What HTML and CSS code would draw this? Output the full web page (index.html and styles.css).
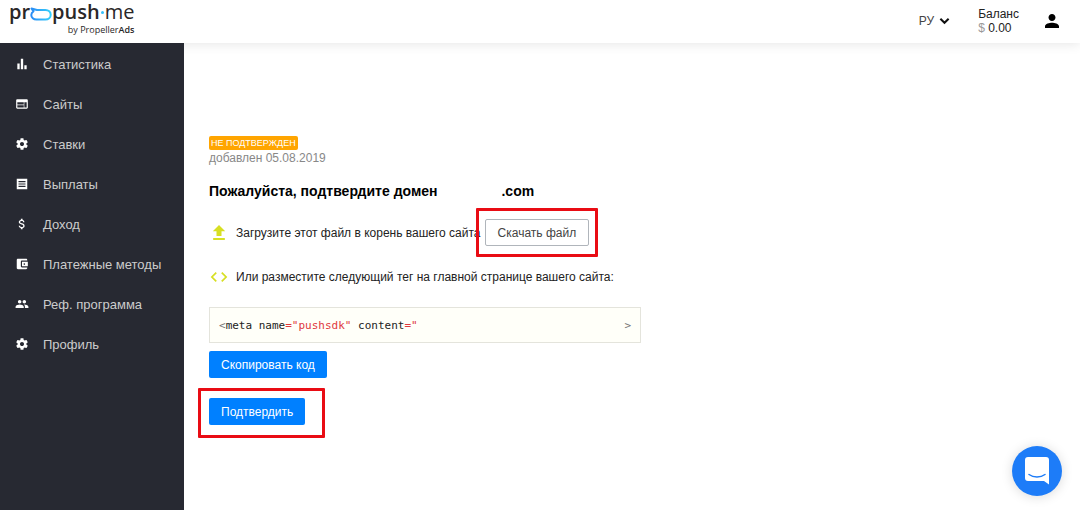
FILE: index.html
```html
<!DOCTYPE html>
<html lang="ru">
  <head>
    <meta charset="utf-8">
    <meta name="viewport" content="width=device-width, initial-scale=1.0">
    <title>ProPush.me</title>
    <link rel="stylesheet" href="styles.css">
  </head>
  <body>
    <!--Header-->
    <header class="header">
      <a class="logo" href="#">
        <span class="logo-name">
          <b>pr</b>
          <svg class="logo-cloud" viewBox="0 0 22 14" width="22" height="14">
            <defs>
              <linearGradient id="cloud" x1="0" x2="1">
                <stop offset="0" stop-color="#2b8cf5"/>
                <stop offset="1" stop-color="#35d0fb"/>
              </linearGradient>
            </defs>
            <path d="M1.500 1.500 L7 3 H15.500 C18.500 3 20.700 5 20.700 7.800 C20.700 10.600 18.500 12.600 15.500 12.600 H6.500 C3.500 12.600 1.300 10.600 1.300 8 C1.300 6.300 2.200 5 3.500 4.300 Z" fill="none" stroke="url(#cloud)" stroke-width="2" stroke-linejoin="round"/>
          </svg>
          <b>push</b><i class="logo-dot"></i><span>me</span>
        </span>
        <span class="logo-by">by Propeller<b>Ads</b></span>
      </a>
      <div class="header-right">
        <button class="lang" type="button">РУ
          <svg viewBox="0 0 12 8" width="11" height="8"><path d="M1.500 1.500 L6 6 L10.500 1.500" fill="none" stroke="#111" stroke-width="2.200"/></svg>
        </button>
        <div class="balance">
          <div>Баланс</div>
          <div><span class="currency">$</span> 0.00</div>
        </div>
        <button class="user" type="button" aria-label="Профиль">
          <svg viewBox="4 4 16 16" width="14" height="14"><path d="M12 12c2.200 0 4-1.800 4-4s-1.800-4-4-4-4 1.800-4 4 1.800 4 4 4zm0 2c-2.700 0-8 1.300-8 4v2h16v-2c0-2.700-5.300-4-8-4z"/></svg>
        </button>
      </div>
    </header>

    <div class="page">
      <!--Menu-->
      <nav class="sidebar">
        <a class="menu-item" href="#">
          <svg viewBox="0 0 24 24"><path d="M4 11h4v10H4zM10 3h4v18h-4zM16 14h4v7h-4z"/></svg>
          Статистика
        </a>
        <a class="menu-item" href="#">
          <svg viewBox="0 0 24 24"><path d="M20 4H4c-1.100 0-2 .9-2 2v12c0 1.100.9 2 2 2h16c1.100 0 2-.9 2-2V6c0-1.100-.9-2-2-2zm-5 14H4v-4h11v4zm0-5H4V9h11v4zm5 5h-4V9h4v9z"/></svg>
          Сайты
        </a>
        <a class="menu-item" href="#">
          <svg viewBox="0 0 24 24"><path d="M19.430 12.980c.04-.32.07-.64.07-.98s-.03-.66-.07-.98l2.110-1.650c.19-.15.240-.42.120-.64l-2-3.460c-.12-.22-.39-.3-.61-.22l-2.490 1c-.52-.4-1.080-.73-1.690-.98l-.38-2.650C14.460 2.180 14.250 2 14 2h-4c-.25 0-.46.180-.49.420l-.38 2.650c-.61.250-1.170.590-1.690.980l-2.490-1c-.23-.09-.49 0-.61.220l-2 3.460c-.13.220-.07.490.120.640l2.110 1.650c-.04.320-.07.650-.07.980s.03.660.07.980l-2.110 1.650c-.19.150-.24.420-.12.640l2 3.460c.12.220.39.300.61.220l2.490-1c.52.400 1.080.730 1.690.980l.38 2.650c.03.240.24.420.49.420h4c.25 0 .46-.18.490-.42l.38-2.650c.61-.25 1.170-.59 1.690-.98l2.490 1c.23.090.49 0 .61-.22l2-3.460c.12-.22.070-.49-.12-.64l-2.110-1.650zM12 15.500c-1.930 0-3.500-1.570-3.500-3.500s1.570-3.500 3.500-3.500 3.500 1.570 3.500 3.500-1.570 3.500-3.500 3.500z"/></svg>
          Ставки
        </a>
        <a class="menu-item" href="#">
          <svg viewBox="0 0 24 24"><path fill-rule="evenodd" d="M3 3h18v18H3zM6 7v2h12V7zM6 11v2h12v-2zM6 15v2h12v-2z"/></svg>
          Выплаты
        </a>
        <a class="menu-item" href="#">
          <svg viewBox="0 0 24 24"><path d="M11.800 10.900c-2.270-.59-3-1.200-3-2.150 0-1.090 1.010-1.850 2.700-1.850 1.780 0 2.440.850 2.500 2.100h2.210c-.07-1.720-1.120-3.300-3.210-3.810V3h-3v2.160c-1.940.42-3.500 1.680-3.500 3.610 0 2.310 1.910 3.460 4.700 4.130 2.500.6 3 1.480 3 2.410 0 .69-.49 1.790-2.700 1.790-2.060 0-2.870-.92-2.980-2.100h-2.200c.12 2.190 1.760 3.420 3.680 3.830V21h3v-2.150c1.950-.37 3.500-1.500 3.500-3.550 0-2.840-2.430-3.810-4.700-4.400z"/></svg>
          Доход
        </a>
        <a class="menu-item" href="#">
          <svg viewBox="0 0 24 24"><path d="M21 18v1c0 1.100-.9 2-2 2H5c-1.110 0-2-.9-2-2V5c0-1.100.890-2 2-2h14c1.100 0 2 .9 2 2v1h-9c-1.110 0-2 .9-2 2v8c0 1.100.890 2 2 2h9zm-9-2h10V8H12v8zm4-2.500c-.83 0-1.500-.67-1.500-1.500s.67-1.500 1.500-1.500 1.500.67 1.500 1.500-.67 1.500-1.500 1.500z" fill-rule="evenodd"/></svg>
          Платежные методы
        </a>
        <a class="menu-item" href="#">
          <svg viewBox="0 0 24 24"><path d="M16 11c1.660 0 2.990-1.340 2.990-3S17.660 5 16 5s-3 1.340-3 3 1.340 3 3 3zm-8 0c1.660 0 2.990-1.340 2.990-3S9.660 5 8 5 5 6.340 5 8s1.340 3 3 3zm0 2c-2.330 0-7 1.170-7 3.500V19h14v-2.500c0-2.330-4.670-3.500-7-3.500zm8 0c-.29 0-.62.020-.97.050 1.160.840 1.970 1.970 1.970 3.450V19h6v-2.500c0-2.330-4.670-3.500-7-3.500z"/></svg>
          Реф. программа
        </a>
        <a class="menu-item" href="#">
          <svg viewBox="0 0 24 24"><path d="M19.430 12.980c.04-.32.07-.64.07-.98s-.03-.66-.07-.98l2.110-1.650c.19-.15.240-.42.120-.64l-2-3.460c-.12-.22-.39-.3-.61-.22l-2.490 1c-.52-.4-1.080-.73-1.690-.98l-.38-2.650C14.460 2.180 14.250 2 14 2h-4c-.25 0-.46.180-.49.420l-.38 2.650c-.61.250-1.170.590-1.690.980l-2.490-1c-.23-.09-.49 0-.61.220l-2 3.460c-.13.220-.07.490.120.640l2.110 1.650c-.04.320-.07.650-.07.980s.03.660.07.980l-2.110 1.650c-.19.150-.24.420-.12.640l2 3.460c.12.220.39.300.61.220l2.490-1c.52.400 1.080.730 1.690.980l.38 2.650c.03.240.24.420.49.420h4c.25 0 .46-.18.490-.42l.38-2.650c.61-.25 1.170-.59 1.690-.98l2.490 1c.23.090.49 0 .61-.22l2-3.460c.12-.22.070-.49-.12-.64l-2.110-1.650zM12 15.500c-1.930 0-3.500-1.570-3.500-3.500s1.570-3.500 3.500-3.500 3.500 1.570 3.500 3.500-1.570 3.500-3.500 3.500z"/></svg>
          Профиль
        </a>
      </nav>

      <!--Domain verification-->
      <main class="content">
        <span class="status">НЕ ПОДТВЕРЖДЕН</span>
        <div class="added">добавлен 05.08.2019</div>
        <h1 class="title"><span>Пожалуйста, подтвердите домен</span><span>.com</span></h1>

        <div class="step">
          <svg viewBox="0 0 24 24" width="20" height="20"><path d="M9 15.500h6v-5.500h4.500L12 2.500 4.500 10H9zM5 18h14v2.500H5z"/></svg>
          <div class="step-text">
            <span>Загрузите этот файл в корень вашего сайта</span>
            <span class="marked">
              <button class="btn btn-outline" type="button">Скачать файл</button>
              <span class="mark mark-download"></span>
            </span>
          </div>
        </div>
        <div class="step">
          <svg viewBox="0 0 24 24" width="20" height="20"><path d="M9.400 16.600L4.800 12l4.600-4.600L8 6l-6 6 6 6 1.400-1.400zm5.200 0l4.600-4.600-4.600-4.600L16 6l6 6-6 6-1.400-1.400z"/></svg>
          <div class="step-text">Или разместите следующий тег на главной странице вашего сайта:</div>
        </div>

        <div class="code">
          <code><span class="bracket">&lt;</span>meta name<span class="value">="pushsdk"</span> content<span class="value">="</span></code>
          <code class="bracket">&gt;</code>
        </div>
        <button class="btn" type="button">Скопировать код</button>
        <div class="marked confirm">
          <button class="btn" type="button">Подтвердить</button>
          <span class="mark mark-confirm"></span>
        </div>
      </main>
    </div>

    <!--Chat-->
    <button class="chat" type="button" aria-label="Чат">
      <svg viewBox="0 0 24 28" width="24" height="28"><path d="M3 0h18a3 3 0 0 1 3 3v24.500l-5-3.500H3a3 3 0 0 1-3-3V3a3 3 0 0 1 3-3z" fill="#fff"/><path d="M4 17.500c4.500 3.300 11.500 3.300 16 0" fill="none" stroke="#1d7cf8" stroke-width="1.500" stroke-linecap="round"/></svg>
    </button>
  </body>
</html>
```

FILE: styles.css
```css
* {
  box-sizing: border-box;
}

body {
  margin: 0;
  min-height: 100vh;
  display: flex;
  flex-direction: column;
  background-color: #fff;
  color: #222;
  font-family: "Liberation Sans", Arial, sans-serif;
  font-size: 12px;
}

button {
  font-family: inherit;
  font-size: inherit;
  cursor: pointer;
}

/* header */
.header {
  display: flex;
  justify-content: space-between;
  align-items: center;
  height: 43px;
  padding: 0 21px 0 9px;
  background-color: #fff;
  box-shadow: 0 0 12px rgba(0, 0, 0, 0.12);
}

.logo {
  display: flex;
  flex-direction: column;
  align-items: flex-end;
  padding-bottom: 8px;
  color: #2a2728;
  font-family: "Open Sans", sans-serif;
  text-decoration: none;
}

.logo-name {
  display: flex;
  align-items: center;
  font-size: 20px;
  line-height: 24px;
}

.logo-name b {
  font-weight: 600;
}

.logo-cloud {
  margin-top: 3px;
}

.logo-dot {
  width: 3px;
  height: 3px;
  margin: 0 1px;
  border-radius: 50%;
  background-color: #35c0fa;
}

.logo-by {
  font-size: 9px;
  line-height: 11px;
}

.logo-by b {
  font-weight: 600;
}

.header-right {
  display: flex;
  align-items: center;
  padding-bottom: 2px;
}

.lang {
  display: flex;
  align-items: center;
  gap: 5px;
  margin-right: 28px;
  padding: 0;
  border: none;
  background: none;
  color: #444;
}

.balance {
  margin-right: 26px;
  line-height: 14px;
}

.currency {
  color: #999;
}

.user {
  display: flex;
  padding: 0;
  border: none;
  background: none;
}

/* menu */
.page {
  display: flex;
  flex: 1;
}

.sidebar {
  flex: 0 0 184px;
  padding-top: 1px;
  background-color: #272932;
  position: relative;
}

.menu-item {
  display: flex;
  align-items: center;
  gap: 14px;
  height: 40px;
  padding-left: 15px;
  color: #ccc;
  font-size: 13px;
  text-decoration: none;
}

.menu-item svg {
  width: 14px;
  height: 14px;
  fill: #fff;
}

/* content */
.content {
  flex: 1;
  display: flex;
  flex-direction: column;
  align-items: flex-start;
  padding: 93px 25px 25px;
}

.status {
  padding: 0 2px;
  border-radius: 2px;
  background-color: #ffa500;
  color: #fff;
  font-size: 9px;
  line-height: 14px;
}

.added {
  color: #888;
  line-height: 16px;
}

.title {
  display: flex;
  gap: 64px;
  margin: 16px 0 19px;
  color: #000;
  font-size: 14px;
  line-height: 18px;
}

.step {
  display: flex;
  align-items: center;
  gap: 7px;
  height: 27px;
  margin-bottom: 17px;
}

.step svg {
  fill: #d7df23;
}

.step-text {
  display: flex;
  align-items: center;
  gap: 4px;
}

.btn {
  height: 27px;
  padding: 0 12px;
  border: none;
  border-radius: 2px;
  background-color: #0080ff;
  color: #fff;
}

.btn-outline {
  border: 1px solid #b0b5bb;
  background-color: #fff;
  color: #444;
}

.code {
  display: flex;
  justify-content: space-between;
  align-items: center;
  width: 100%;
  max-width: 432px;
  height: 36px;
  margin-bottom: 8px;
  padding: 0 9px;
  border: 1px solid #e4e4dc;
  background-color: #fffff9;
}

.code code {
  font-family: "DejaVu Sans Mono", monospace;
  font-size: 11px;
}

.code .bracket {
  color: #777;
}

.value {
  color: #e0393e;
}

/* red highlight frames around the buttons */
.marked {
  position: relative;
}

.confirm {
  margin-top: 20px;
}

.mark {
  position: absolute;
  border: 3px solid #e90c14;
  border-radius: 1px;
  pointer-events: none;
}

.mark-download {
  inset: -11px -9px -11px -9px;
}

.mark-confirm {
  inset: -10px -20px -13px -11px;
}

/* chat */
.chat {
  position: fixed;
  right: 18px;
  bottom: 14px;
  display: flex;
  align-items: center;
  justify-content: center;
  width: 50px;
  height: 50px;
  border: none;
  border-radius: 50%;
  background-color: #1d7cf8;
  box-shadow: 0 1px 12px rgba(0, 0, 0, 0.15);
}
```
